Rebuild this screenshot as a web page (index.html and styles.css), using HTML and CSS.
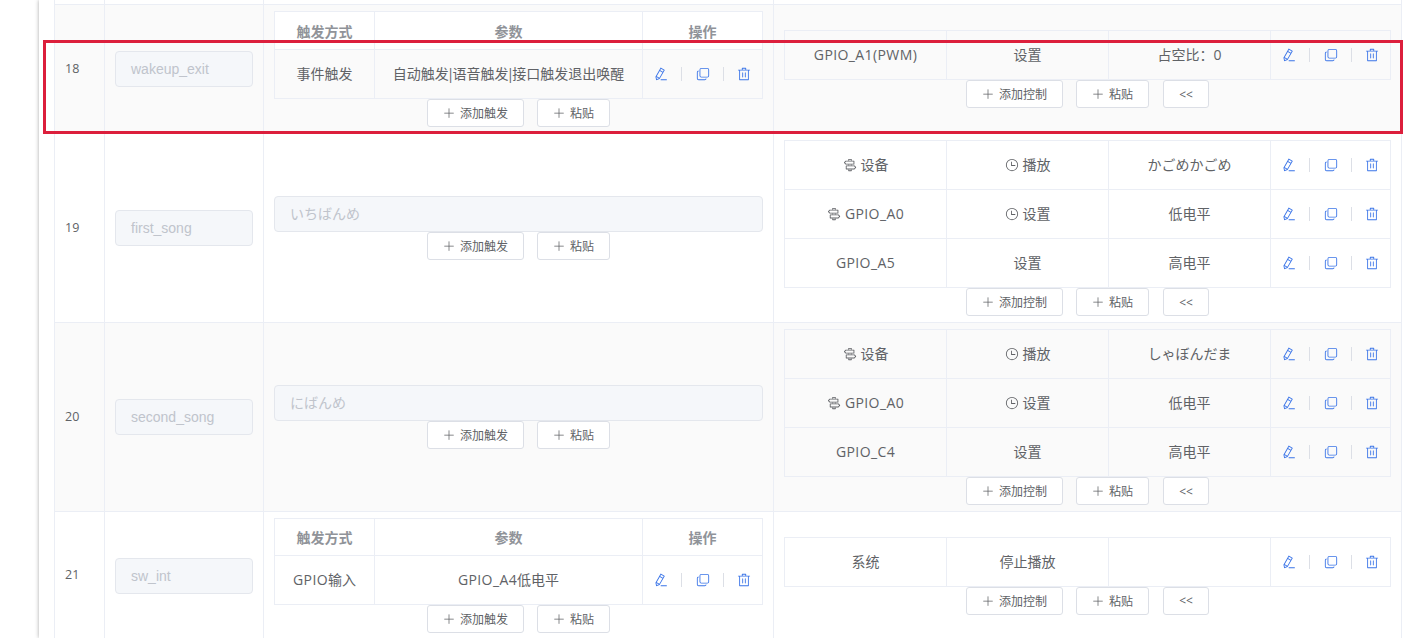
FILE: index.html
```
<!DOCTYPE html>
<html lang="zh-CN">
  <head>
    <meta charset="UTF-8">
    <meta name="viewport" content="width=device-width, initial-scale=1.0">
    <title>触发与控制</title>
    <link rel="stylesheet" href="styles.css">
  </head>
  <body>
    <svg class="sprite">
      <symbol id="edit" viewBox="0 0 1024 1024"><path d="m199.04 672.64 193.984 112 224-387.968-193.92-112-224 388.032zm-23.872 60.16 32.896 148.288 144.896-45.696L175.168 732.8zM455.04 229.248l193.92 112 56.704-98.112-193.984-112-56.64 98.112zM104.32 708.8l384-665.024 304.768 175.936L409.152 884.8h.064l-248.448 78.336L104.32 708.8zm384 254.272v-64h448v64h-448z"/></symbol>
      <symbol id="copy" viewBox="0 0 1024 1024"><path d="M768 832a128 128 0 0 1-128 128H192A128 128 0 0 1 64 832V384a128 128 0 0 1 128-128v64a64 64 0 0 0-64 64v448a64 64 0 0 0 64 64h448a64 64 0 0 0 64-64h64z"/><path d="M384 128a64 64 0 0 0-64 64v448a64 64 0 0 0 64 64h448a64 64 0 0 0 64-64V192a64 64 0 0 0-64-64H384zm0-64h448a128 128 0 0 1 128 128v448a128 128 0 0 1-128 128H384a128 128 0 0 1-128-128V192A128 128 0 0 1 384 64z"/></symbol>
      <symbol id="delete" viewBox="0 0 1024 1024"><path d="M160 256H96a32 32 0 0 1 0-64h256V95.936a32 32 0 0 1 32-32h256a32 32 0 0 1 32 32V192h256a32 32 0 1 1 0 64h-64v672a32 32 0 0 1-32 32H192a32 32 0 0 1-32-32V256zm448-64v-64H416v64h192zM224 896h576V256H224v640zm192-128a32 32 0 0 1-32-32V416a32 32 0 0 1 64 0v320a32 32 0 0 1-32 32zm192 0a32 32 0 0 1-32-32V416a32 32 0 0 1 64 0v320a32 32 0 0 1-32 32z"/></symbol>
      <symbol id="clock" viewBox="0 0 1024 1024"><path d="M512 896a384 384 0 1 0 0-768 384 384 0 0 0 0 768zm0 64a448 448 0 1 1 0-896 448 448 0 0 1 0 896z"/><path d="M480 256a32 32 0 0 1 32 32v256a32 32 0 0 1-64 0V288a32 32 0 0 1 32-32z"/><path d="M480 512h256q32 0 32 32t-32 32H480q-32 0-32-32t32-32z"/></symbol>
      <symbol id="guide" viewBox="0 0 1024 1024"><path d="M640 544h-64v-64h64v64zm0 288v96a32 32 0 0 1-32 32H416a32 32 0 0 1-32-32v-96h64v64h128v-64h64zM384 544v-64h64v64h-64zm256-352h-64v-64H448v64h-64V96a32 32 0 0 1 32-32h192a32 32 0 0 1 32 32v96z"/><path d="m220.8 256-71.232 80 71.168 80H768V256H220.8zm-14.4-64H800a32 32 0 0 1 32 32v224a32 32 0 0 1-32 32H206.4a32 32 0 0 1-23.936-10.752l-99.584-112a32 32 0 0 1 0-42.496l99.584-112A32 32 0 0 1 206.4 192zm607.648 576H266.816V608h547.2l71.168 80-71.104 80zM828.48 544H234.88a32 32 0 0 0-32 32v224a32 32 0 0 0 32 32h593.6a32 32 0 0 0 23.936-10.752l99.584-112a32 32 0 0 0 0-42.496l-99.584-112A32 32 0 0 0 828.48 544z"/></symbol>
      <symbol id="plus" viewBox="0 0 1024 1024"><path d="M480 480V128a32 32 0 0 1 64 0v352h352a32 32 0 1 1 0 64H544v352a32 32 0 1 1-64 0V544H128a32 32 0 0 1 0-64h352z"/></symbol>
    </svg>

    <div class="panel">
      <div class="table">
        <div class="row row-cut">
          <div class="cell"></div>
          <div class="cell"></div>
          <div class="cell"></div>
          <div class="cell"></div>
        </div>

        <div class="row row-tall striped">
          <div class="cell index">18</div>
          <div class="cell"><div class="input">wakeup_exit</div></div>
          <div class="cell">
            <div class="inner trigger">
              <div class="th">触发方式</div><div class="th">参数</div><div class="th">操作</div>
              <div class="td">事件触发</div>
              <div class="td">自动触发<span class="bar">|</span>语音触发<span class="bar">|</span>接口触发退出唤醒</div>
              <div class="td actions"><svg><use href="#edit"/></svg><i></i><svg><use href="#copy"/></svg><i></i><svg><use href="#delete"/></svg></div>
            </div>
            <div class="buttons">
              <button class="add"><svg><use href="#plus"/></svg>添加触发</button>
              <button class="paste"><svg><use href="#plus"/></svg>粘贴</button>
            </div>
          </div>
          <div class="cell">
            <div class="inner control">
              <div class="td"><span class="pin">GPIO_A1(PWM)</span></div>
              <div class="td">设置</div>
              <div class="td">占空比：0</div>
              <div class="td actions"><svg><use href="#edit"/></svg><i></i><svg><use href="#copy"/></svg><i></i><svg><use href="#delete"/></svg></div>
            </div>
            <div class="buttons">
              <button class="add"><svg><use href="#plus"/></svg>添加控制</button>
              <button class="paste"><svg><use href="#plus"/></svg>粘贴</button>
              <button class="fold">&lt;&lt;</button>
            </div>
          </div>
        </div>

        <div class="row">
          <div class="cell index">19</div>
          <div class="cell"><div class="input">first_song</div></div>
          <div class="cell">
            <div class="input">いちばんめ</div>
            <div class="buttons">
              <button class="add"><svg><use href="#plus"/></svg>添加触发</button>
              <button class="paste"><svg><use href="#plus"/></svg>粘贴</button>
            </div>
          </div>
          <div class="cell">
            <div class="inner control">
              <div class="td"><svg><use href="#guide"/></svg>设备</div>
              <div class="td"><svg><use href="#clock"/></svg>播放</div>
              <div class="td">かごめかごめ</div>
              <div class="td actions"><svg><use href="#edit"/></svg><i></i><svg><use href="#copy"/></svg><i></i><svg><use href="#delete"/></svg></div>
              <div class="td"><svg><use href="#guide"/></svg><span class="pin">GPIO_A0</span></div>
              <div class="td"><svg><use href="#clock"/></svg>设置</div>
              <div class="td">低电平</div>
              <div class="td actions"><svg><use href="#edit"/></svg><i></i><svg><use href="#copy"/></svg><i></i><svg><use href="#delete"/></svg></div>
              <div class="td"><span class="pin">GPIO_A5</span></div>
              <div class="td">设置</div>
              <div class="td">高电平</div>
              <div class="td actions"><svg><use href="#edit"/></svg><i></i><svg><use href="#copy"/></svg><i></i><svg><use href="#delete"/></svg></div>
            </div>
            <div class="buttons">
              <button class="add"><svg><use href="#plus"/></svg>添加控制</button>
              <button class="paste"><svg><use href="#plus"/></svg>粘贴</button>
              <button class="fold">&lt;&lt;</button>
            </div>
          </div>
        </div>

        <div class="row striped">
          <div class="cell index">20</div>
          <div class="cell"><div class="input">second_song</div></div>
          <div class="cell">
            <div class="input">にばんめ</div>
            <div class="buttons">
              <button class="add"><svg><use href="#plus"/></svg>添加触发</button>
              <button class="paste"><svg><use href="#plus"/></svg>粘贴</button>
            </div>
          </div>
          <div class="cell">
            <div class="inner control">
              <div class="td"><svg><use href="#guide"/></svg>设备</div>
              <div class="td"><svg><use href="#clock"/></svg>播放</div>
              <div class="td">しゃぼんだま</div>
              <div class="td actions"><svg><use href="#edit"/></svg><i></i><svg><use href="#copy"/></svg><i></i><svg><use href="#delete"/></svg></div>
              <div class="td"><svg><use href="#guide"/></svg><span class="pin">GPIO_A0</span></div>
              <div class="td"><svg><use href="#clock"/></svg>设置</div>
              <div class="td">低电平</div>
              <div class="td actions"><svg><use href="#edit"/></svg><i></i><svg><use href="#copy"/></svg><i></i><svg><use href="#delete"/></svg></div>
              <div class="td"><span class="pin">GPIO_C4</span></div>
              <div class="td">设置</div>
              <div class="td">高电平</div>
              <div class="td actions"><svg><use href="#edit"/></svg><i></i><svg><use href="#copy"/></svg><i></i><svg><use href="#delete"/></svg></div>
            </div>
            <div class="buttons">
              <button class="add"><svg><use href="#plus"/></svg>添加控制</button>
              <button class="paste"><svg><use href="#plus"/></svg>粘贴</button>
              <button class="fold">&lt;&lt;</button>
            </div>
          </div>
        </div>

        <div class="row">
          <div class="cell index">21</div>
          <div class="cell"><div class="input">sw_int</div></div>
          <div class="cell">
            <div class="inner trigger">
              <div class="th">触发方式</div><div class="th">参数</div><div class="th">操作</div>
              <div class="td"><span class="pin">GPIO</span>输入</div>
              <div class="td"><span class="pin">GPIO_A4</span>低电平</div>
              <div class="td actions"><svg><use href="#edit"/></svg><i></i><svg><use href="#copy"/></svg><i></i><svg><use href="#delete"/></svg></div>
            </div>
            <div class="buttons">
              <button class="add"><svg><use href="#plus"/></svg>添加触发</button>
              <button class="paste"><svg><use href="#plus"/></svg>粘贴</button>
            </div>
          </div>
          <div class="cell">
            <div class="inner control">
              <div class="td">系统</div>
              <div class="td">停止播放</div>
              <div class="td"></div>
              <div class="td actions"><svg><use href="#edit"/></svg><i></i><svg><use href="#copy"/></svg><i></i><svg><use href="#delete"/></svg></div>
            </div>
            <div class="buttons">
              <button class="add"><svg><use href="#plus"/></svg>添加控制</button>
              <button class="paste"><svg><use href="#plus"/></svg>粘贴</button>
              <button class="fold">&lt;&lt;</button>
            </div>
          </div>
        </div>
      </div>
    </div>
    <div class="highlight"></div>
  </body>
</html>
```
FILE: styles.css
```
*{
  box-sizing: border-box;
}
body{
  margin: 0;
  height: 638px;
  overflow: hidden;
  background-color: white;
  color: #606266;
  font-family: 'Open Sans', 'Noto Sans CJK SC', sans-serif;
  font-size: 14px;
}
.sprite{
  display: none;
}
svg{
  width: 14px;
  height: 14px;
  fill: currentColor;
  flex-shrink: 0;
}
.panel{
  height: 638px;
  margin-left: 39px;
  padding-left: 15px;
  box-shadow: 0 0 4px rgba(0, 0, 0, 0.35);
}
.table{
  width: 1348px;
  border-left: 1px solid #ebeef5;
}
.row{
  display: grid;
  grid-template-columns: 50px 159px 510px 628px;
}
.cell{
  display: flex;
  flex-direction: column;
  justify-content: center;
  padding: 6px 10px;
  border-right: 1px solid #ebeef5;
  border-bottom: 1px solid #ebeef5;
}
.row-cut .cell{
  height: 5px;
  padding: 0;
}
.striped{
  background-color: #fafafa;
}
.index{
  padding-bottom: 8px;
  font-size: 12.5px;
}
.input{
  height: 36px;
  padding: 0 15px;
  border: 1px solid #e4e7ed;
  border-radius: 4px;
  background-color: #f5f7fa;
  color: #c0c4cc;
  font-family: 'Liberation Sans', 'Noto Sans CJK JP', sans-serif;
  line-height: 34px;
}
.inner{
  display: grid;
  border-left: 1px solid #ebeef5;
  border-top: 1px solid #ebeef5;
}
.trigger{
  grid-template-columns: 100px 268px 120px;
}
.control{
  grid-template-columns: 162px 162px 162px 120px;
}
.th, .td{
  display: flex;
  align-items: center;
  justify-content: center;
  height: 49px;
  padding-bottom: 2px;
  border-right: 1px solid #ebeef5;
  border-bottom: 1px solid #ebeef5;
  white-space: nowrap;
}
.th{
  height: 37px;
  padding-bottom: 0;
  background-color: white;
  color: #909399;
  font-weight: bold;
}
.row-tall .th{
  height: 38px;
}
.td svg{
  margin-top: 2px;
  margin-right: 4px;
}
.pin{
  letter-spacing: 0.4px;
}
.bar{
  margin: 0 -2px;
}
.td.actions{
  padding-bottom: 0;
  color: #3a74e8;
}
.actions svg{
  margin: 0;
}
.actions i{
  width: 1px;
  height: 14px;
  margin: 0 13.2px;
  background-color: #dcdfe6;
}
.buttons{
  display: flex;
  justify-content: center;
  gap: 13px;
}
button{
  display: flex;
  align-items: center;
  justify-content: center;
  height: 28px;
  padding: 0;
  border: 1px solid #dcdfe6;
  border-radius: 3px;
  background-color: white;
  color: #606266;
  font-family: inherit;
  font-size: 12px;
}
button svg{
  width: 12px;
  height: 12px;
  margin-right: 5px;
}
.add{
  width: 97px;
}
.paste{
  width: 73px;
}
.fold{
  width: 46px;
  margin-left: 1px;
}
/* red frame drawn over the row being explained */
.highlight{
  position: absolute;
  left: 43px;
  top: 40px;
  width: 1360px;
  height: 94px;
  border: 3px solid #dc1f3c;
}
```
